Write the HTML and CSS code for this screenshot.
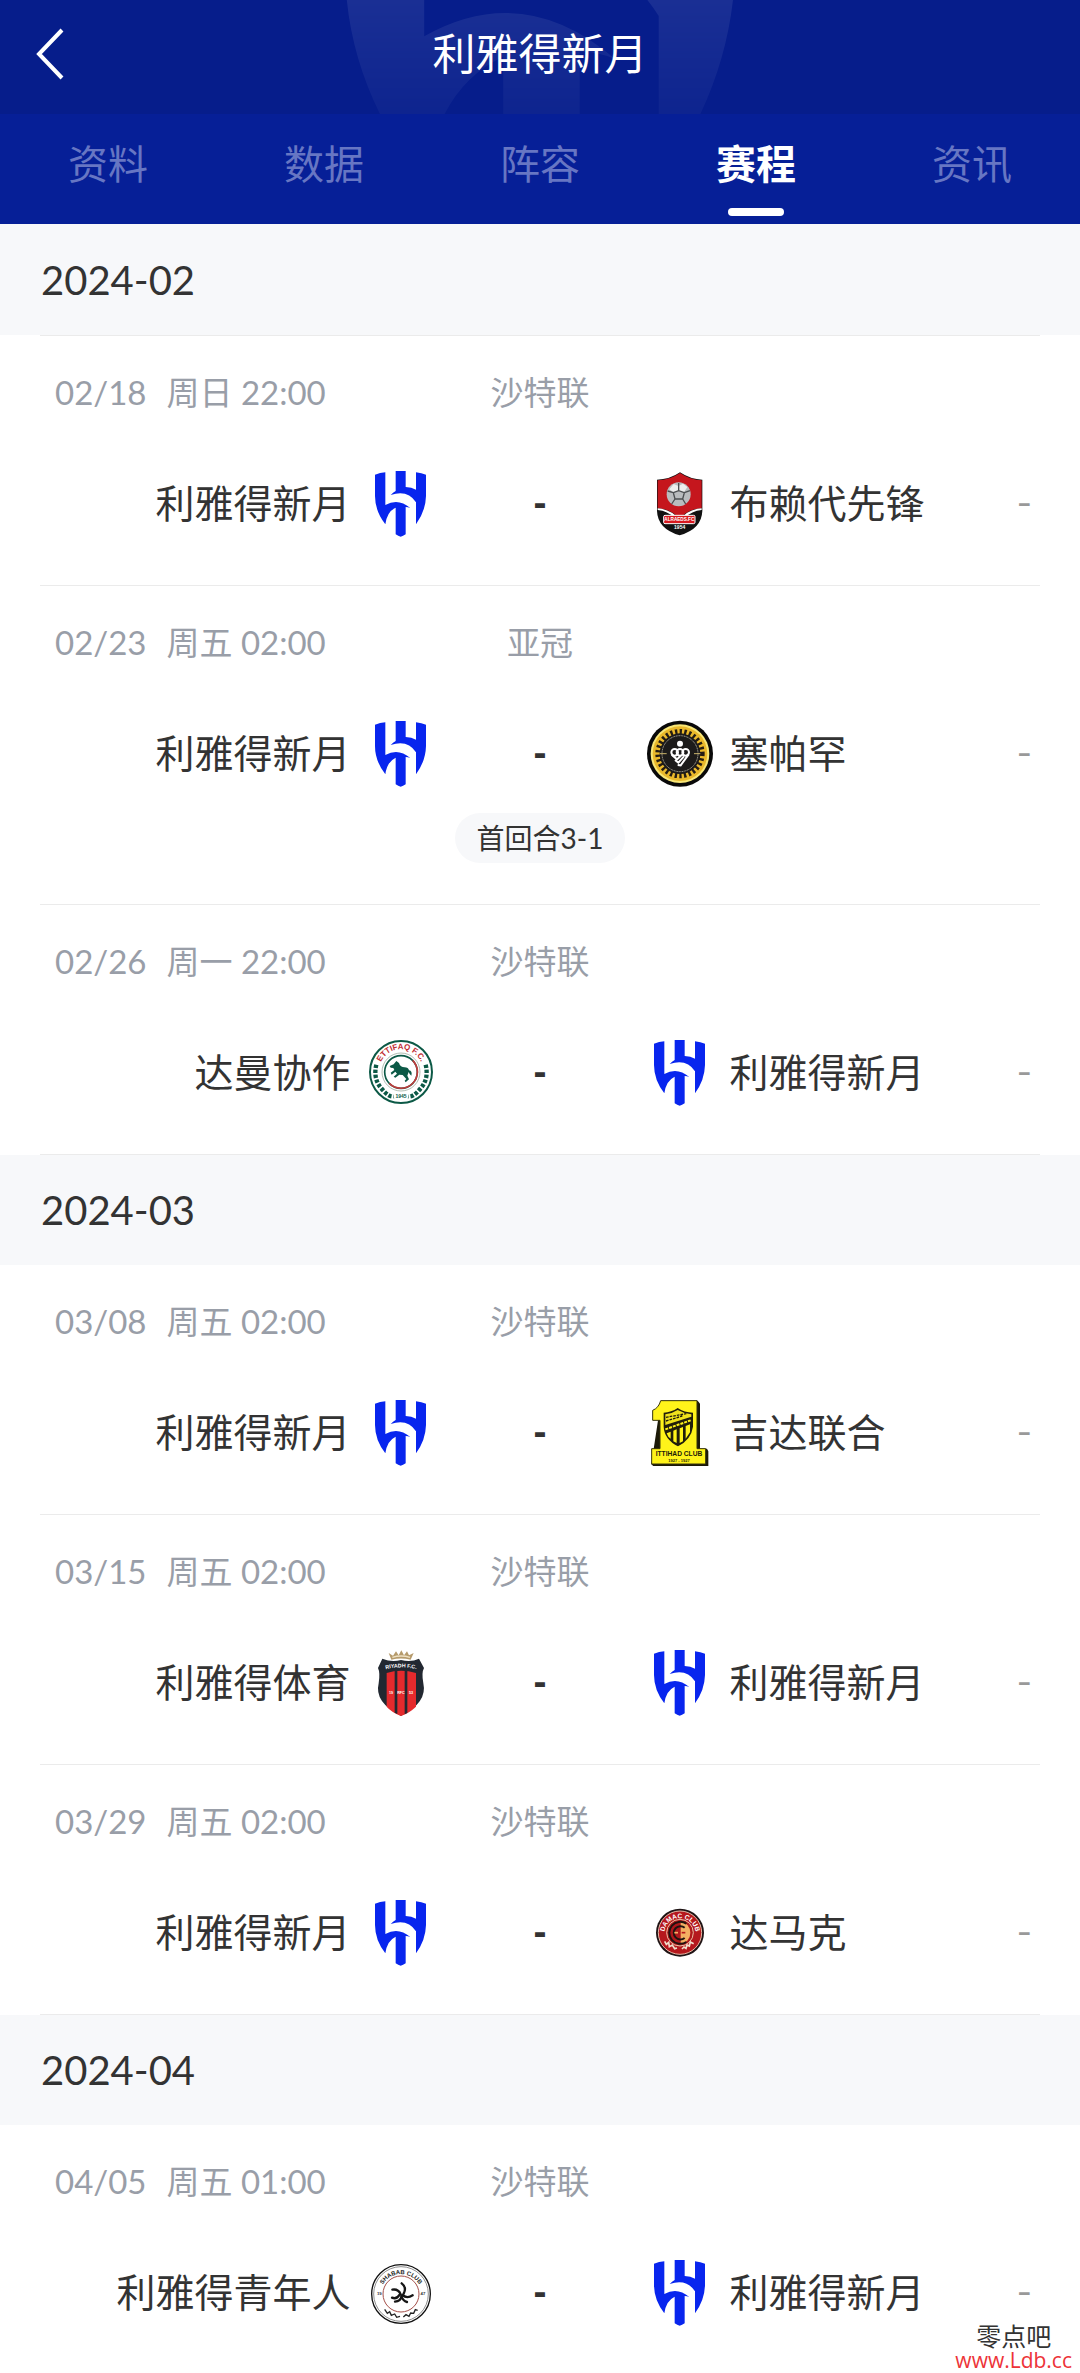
FILE: index.html
```html
<!DOCTYPE html>
<html lang="zh-CN">

<head>
  <meta charset="UTF-8" />
  <meta name="viewport" content="width=device-width, initial-scale=1.0" />
  <title>利雅得新月 - 赛程</title>
  <link rel="stylesheet" href="styles.css">
</head>

<body>
  <!-- Al Hilal crest, used in the header and in every match -->
  <svg class="sprite" aria-hidden="true">
    <symbol id="hilal" viewBox="-24 -6 204 204">
      <path fill="currentColor" d="M0 11Q15 5 31 4V102Q70 80 106 111Q99 108 92 108V190Q84 195 77 197Q70 195 62 190V110Q36 122 31 160Q0 120 0 75Z" />
      <path fill="currentColor" d="M62 0H92V48Q110 49 123 56V4Q140 6 153 11V75Q152 120 123 160V94Q98 55 47 72Q54 64 62 60Z" />
    </symbol>
  </svg>

  <header class="topbar">
    <svg class="topbar-crest" aria-hidden="true"><use href="#hilal" /></svg>
    <button class="back-btn" type="button" aria-label="返回">
      <svg width="30" height="54" viewBox="0 0 30 54" aria-hidden="true">
        <path d="M27 3L4 27L27 51" fill="none" stroke="#fff" stroke-width="4" />
      </svg>
    </button>
    <h1>利雅得新月</h1>
  </header>

  <nav class="tabs">
    <a href="#info">资料</a>
    <a href="#stats">数据</a>
    <a href="#squad">阵容</a>
    <a href="#schedule" class="active" aria-current="page">赛程</a>
    <a href="#news">资讯</a>
  </nav>

  <main class="schedule" id="schedule">
    <section class="month">
      <h2>2024-02</h2>
      <ul class="matches">
        <li class="match">
          <div class="match-info">
            <div class="match-date"><span>02/18</span><span>周日 22:00</span></div>
            <div class="league">沙特联</div>
          </div>
          <div class="teams">
            <div class="team home">
              <span>利雅得新月</span>
              <svg class="crest"><use href="#hilal" /></svg>
            </div>
            <div class="score">-</div>
            <div class="team">
              <svg class="crest" viewBox="15 42 204 204">
                <path fill="#111" d="M48 74Q85 74 117 52Q150 74 184 74V168Q182 222 116 241Q50 222 48 168Z" />
                <path fill="#c5161d" d="M50 76Q85 76 117 54Q150 76 182 76V160Q150 160 116 188Q80 160 50 160Z" />
                <path fill="#fff" d="M50 160Q80 162 104 182H128Q150 162 182 160V165Q152 168 132 188H100Q80 168 50 165Z" />
                <circle cx="113" cy="118" r="36" fill="#b9bcbe" />
                <path fill="#eee" d="M98 87L112 93L126 86L139 96L129 112L113 108L97 112L85 103Z" />
                <path fill="none" stroke="#4c4f51" stroke-width="4" d="M113 84V108M97 113L113 107L130 113L125 132H102ZM97 113L80 108M130 113L147 107M102 132L92 147M125 132L134 147" />
                <rect x="68" y="181" width="94" height="25" rx="4" fill="#d81920" stroke="#fff" stroke-width="3" />
                <text x="115" y="199" font-size="14" fill="#fff">ALRAEDS.FC</text>
                <text x="116" y="223" font-size="15" fill="#fff">1954</text>
              </svg>
              <span>布赖代先锋</span>
            </div>
            <div class="result">-</div>
          </div>
        </li>
        <li class="match two-legs">
          <div class="match-info">
            <div class="match-date"><span>02/23</span><span>周五 02:00</span></div>
            <div class="league">亚冠</div>
          </div>
          <div class="teams">
            <div class="team home">
              <span>利雅得新月</span>
              <svg class="crest"><use href="#hilal" /></svg>
            </div>
            <div class="score">-</div>
            <div class="team">
              <svg class="crest" viewBox="30 27 204 204">
                <circle cx="132" cy="131" r="99" fill="#090909" />
                <circle cx="132" cy="131" r="88" fill="#f8e778" />
                <circle cx="132" cy="131" r="82" fill="#eab92b" />
                <circle cx="132" cy="131" r="66" fill="none" stroke="#241c13" stroke-width="16" stroke-dasharray="7 7" />
                <circle cx="132" cy="131" r="61" fill="#1c1b1a" />
                <circle cx="132" cy="131" r="54" fill="none" stroke="#b8b3a3" stroke-width="3" stroke-dasharray="3 2" />
                <circle cx="132" cy="101" r="9" fill="#fff" />
                <g fill="none" stroke="#fff" stroke-width="6">
                  <circle cx="116" cy="127" r="10" />
                  <circle cx="132" cy="127" r="10" />
                  <circle cx="149" cy="127" r="10" />
                  <path d="M107 134L123 148L134 138M117 150L127 158L144 139M125 165L134 166L158 133" />
                </g>
                <path stroke="#c9b46b" stroke-width="3" d="M72 131H92M174 131H193" />
              </svg>
              <span>塞帕罕</span>
            </div>
            <div class="result">-</div>
          </div>
          <div class="first-leg">首回合3-1</div>
        </li>
        <li class="match">
          <div class="match-info">
            <div class="match-date"><span>02/26</span><span>周一 22:00</span></div>
            <div class="league">沙特联</div>
          </div>
          <div class="teams">
            <div class="team home">
              <span>达曼协作</span>
              <svg class="crest" viewBox="18 24 204 204">
                <circle cx="120" cy="126" r="93" fill="#fff" stroke="#0c5946" stroke-width="6" />
                <circle cx="120" cy="126" r="49" fill="none" stroke="#0c5946" stroke-width="5" />
                <path fill="none" stroke="#c23b3b" stroke-width="5" d="M155 91A49 49 0 0 1 85 160" />
                <circle cx="120" cy="126" r="57" fill="none" stroke="#8a9c8c" stroke-width="2" />
                <path id="ettifaq-arc" fill="none" d="M55 112A66 66 0 0 1 185 112" />
                <text font-size="24" fill="#c02d31"><textPath href="#ettifaq-arc" startOffset="50%">ETTIFAQ F.C.</textPath></text>
                <path fill="none" stroke="#0c5946" stroke-width="13" stroke-dasharray="10 5" d="M46 104Q36 145 60 174T98 199M194 104Q204 145 180 174T142 199" />
                <path fill="#0c5946" d="M98 103L106 93L114 99Q118 112 131 112Q142 112 144 121Q155 123 151 137Q145 132 143 126L139 137L144 148L134 157L131 152L136 147L125 135L115 134L103 143L98 140L108 131L103 125L92 134L89 128L100 120L97 114L89 113L86 108Z" />
                <text x="120" y="203" font-size="15" fill="#0c5946">1945</text>
              </svg>
            </div>
            <div class="score">-</div>
            <div class="team">
              <svg class="crest"><use href="#hilal" /></svg>
              <span>利雅得新月</span>
            </div>
            <div class="result">-</div>
          </div>
        </li>
      </ul>
    </section>

    <section class="month">
      <h2>2024-03</h2>
      <ul class="matches">
        <li class="match">
          <div class="match-info">
            <div class="match-date"><span>03/08</span><span>周五 02:00</span></div>
            <div class="league">沙特联</div>
          </div>
          <div class="teams">
            <div class="team home">
              <span>利雅得新月</span>
              <svg class="crest"><use href="#hilal" /></svg>
            </div>
            <div class="score">-</div>
            <div class="team">
              <svg class="crest" viewBox="30 36 204 204">
                <path fill="#1b1908" d="M75 44H185L192 53V188H213L217 196V240L54 242L46 235Z" />
                <path fill="#fff31a" stroke="#37330b" stroke-width="3" d="M74 44H183V188H209V234H47V188H72V103H50V73Q68 66 74 44Z" />
                <path fill="#211e0b" d="M83 80Q106 79 125 66Q145 80 171 80V122Q166 160 126 181Q85 160 83 122Z" />
                <path fill="#efe21c" d="M88 85Q108 83 125 72Q145 83 166 85V92L88 117Z" />
                <path fill="none" stroke="#211e0b" stroke-width="4" stroke-dasharray="8 3" d="M90 94L151 83M90 105L139 90" />
                <path fill="none" stroke="#fff31a" stroke-width="6" stroke-dasharray="9 3" d="M88 130L164 103" />
                <path fill="#fff31a" d="M92 142L104 137V158L97 152ZM112 134L122 130V171L112 166ZM131 127L141 123V166L131 171ZM149 120L162 115V139L149 158Z" />
                <text x="129" y="211" font-size="20" fill="#1b1908">ITTIHAD CLUB</text>
                <text x="129" y="227" font-size="12" fill="#1b1908">1927 - 1927</text>
              </svg>
              <span>吉达联合</span>
            </div>
            <div class="result">-</div>
          </div>
        </li>
        <li class="match">
          <div class="match-info">
            <div class="match-date"><span>03/15</span><span>周五 02:00</span></div>
            <div class="league">沙特联</div>
          </div>
          <div class="teams">
            <div class="team home">
              <span>利雅得体育</span>
              <svg class="crest" viewBox="18 21 204 204">
                <path fill="#b69b6c" d="M91 56L83 36L96 44L105 31L113 43L121 28L129 43L138 31L144 43L158 36L149 56Q120 49 91 56Z" />
                <path fill="none" stroke="#eee0c2" stroke-width="4" d="M94 49Q120 41 147 49" />
                <path fill="#222831" d="M64 53Q92 65 120 57Q150 65 174 53L189 81Q181 95 187 127Q200 184 120 225Q39 184 53 127Q58 95 51 81Z" />
                <path fill="#e52a2d" d="M77 96Q120 83 165 96V197Q145 216 120 225Q92 214 77 197Z" />
                <path fill="#222831" d="M101 90H109V219L101 215ZM131 90H139V216L131 220Z" />
                <path id="riyadh-arc" fill="none" d="M68 86Q120 72 172 86" />
                <text font-size="16" fill="#fff"><textPath href="#riyadh-arc" startOffset="50%">RIYADH F.C.</textPath></text>
                <text x="90" y="159" font-size="11" fill="#fff">19</text>
                <text x="120" y="159" font-size="11" fill="#fff">RFC</text>
                <text x="150" y="159" font-size="11" fill="#fff">53</text>
              </svg>
            </div>
            <div class="score">-</div>
            <div class="team">
              <svg class="crest"><use href="#hilal" /></svg>
              <span>利雅得新月</span>
            </div>
            <div class="result">-</div>
          </div>
        </li>
        <li class="match">
          <div class="match-info">
            <div class="match-date"><span>03/29</span><span>周五 02:00</span></div>
            <div class="league">沙特联</div>
          </div>
          <div class="teams">
            <div class="team home">
              <span>利雅得新月</span>
              <svg class="crest"><use href="#hilal" /></svg>
            </div>
            <div class="score">-</div>
            <div class="team">
              <svg class="crest" viewBox="30 21 204 204">
                <circle cx="132" cy="125" r="72" fill="#1f1415" />
                <circle cx="132" cy="125" r="65" fill="#b5181d" stroke="#e7b8a5" stroke-width="3" />
                <circle cx="132" cy="125" r="40" fill="#ae171b" stroke="#edc3a6" stroke-width="3" />
                <path fill="#f3ae62" d="M134 91A35 35 0 0 1 134 160Z" />
                <path fill="none" stroke="#20120f" stroke-width="6" d="M151 98A33 33 0 1 0 151 153M146 110A20 20 0 1 0 146 141" />
                <path stroke="#f4b365" stroke-width="5" d="M115 125H126" />
                <path stroke="#b5181d" stroke-width="5" d="M137 125H148" />
                <path id="damac-arc" fill="none" d="M86 119A47 47 0 0 1 178 119" />
                <text font-size="20" fill="#fff"><textPath href="#damac-arc" startOffset="50%">DAMAC CLUB</textPath></text>
                <path fill="none" stroke="#f0dfcc" stroke-width="5" d="M86 151L91 160L98 154L100 167L109 162L116 173L123 171M138 174L144 168L150 172L153 162L160 165L163 153L173 158" />
              </svg>
              <span>达马克</span>
            </div>
            <div class="result">-</div>
          </div>
        </li>
      </ul>
    </section>

    <section class="month">
      <h2>2024-04</h2>
      <ul class="matches">
        <li class="match">
          <div class="match-info">
            <div class="match-date"><span>04/05</span><span>周五 01:00</span></div>
            <div class="league">沙特联</div>
          </div>
          <div class="teams">
            <div class="team home">
              <span>利雅得青年人</span>
              <svg class="crest" viewBox="18 18 204 204">
                <circle cx="120" cy="126" r="88" fill="#fff" stroke="#111" stroke-width="4" />
                <circle cx="120" cy="126" r="82" fill="none" stroke="#555" stroke-width="2" />
                <circle cx="120" cy="126" r="54" fill="none" stroke="#a44f49" stroke-width="3" />
                <path id="shabab-arc" fill="none" d="M58 118A63 63 0 0 1 182 118" />
                <text font-size="18" fill="#222"><textPath href="#shabab-arc" startOffset="50%">SHABAB CLUB</textPath></text>
                <text x="55" y="130" font-size="13" fill="#333">19</text>
                <text x="186" y="130" font-size="13" fill="#333">47</text>
                <path fill="none" stroke="#222" stroke-width="4" d="M71 172L79 184L86 179L91 190L101 186L107 196L117 193M127 195L135 188L144 193L149 183L158 184L163 173L170 175" />
                <g fill="none" stroke="#161616" stroke-width="7" stroke-linecap="round">
                  <path d="M122 94Q138 106 128 125" />
                  <path d="M94 113Q112 110 119 127" />
                  <path d="M93 137Q107 143 116 128" />
                  <path d="M102 149Q119 148 122 133" />
                  <path d="M155 130Q138 141 124 129" />
                  <path d="M138 150Q126 147 121 132" />
                </g>
              </svg>
            </div>
            <div class="score">-</div>
            <div class="team">
              <svg class="crest"><use href="#hilal" /></svg>
              <span>利雅得新月</span>
            </div>
            <div class="result">-</div>
          </div>
        </li>
      </ul>
    </section>
  </main>

  <div class="site-mark">
    <span>零点吧</span>
    <a href="#schedule">www.Ldb.cc</a>
  </div>
</body>

</html>
```
FILE: styles.css
```css
* {
  margin: 0;
  padding: 0;
  box-sizing: border-box;
}

body {
  position: relative;
  font-family: Lato, 'Noto Sans CJK SC', sans-serif;
  background: #fff;
  color: #333;
}

.sprite {
  display: none;
}

/* Header */
.topbar {
  position: relative;
  display: flex;
  align-items: center;
  justify-content: center;
  height: 114px;
  padding-bottom: 6px;
  overflow: hidden;
  background: #061d8b;
}

.topbar-crest {
  position: absolute;
  top: -239px;
  left: 50%;
  width: 520px;
  height: 520px;
  margin-left: -256px;
  color: #fff;
  opacity: 0.08;
  -webkit-mask-image: linear-gradient(#000 46%, rgba(0, 0, 0, 0.4) 68%);
  mask-image: linear-gradient(#000 46%, rgba(0, 0, 0, 0.4) 68%);
}

.back-btn {
  position: absolute;
  left: 35px;
  top: 27px;
  height: 54px;
  background: none;
  border: none;
  cursor: pointer;
}

.topbar h1 {
  position: relative;
  font-size: 43px;
  font-weight: 400;
  line-height: 60px;
  color: #fff;
}

.tabs {
  display: grid;
  grid-template-columns: repeat(5, 1fr);
  height: 110px;
  background: #061f97;
}

.tabs a {
  position: relative;
  padding-top: 20px;
  font-size: 40px;
  line-height: 60px;
  text-align: center;
  text-decoration: none;
  color: #6776c3;
}

.tabs a.active {
  font-weight: bold;
  color: #fff;
}

.tabs a.active::after {
  content: "";
  position: absolute;
  left: 50%;
  bottom: 8px;
  width: 56px;
  height: 8px;
  margin-left: -28px;
  border-radius: 4px;
  background: #fff;
}

/* Match list */
.schedule {
  padding-top: 1px;
  background: #f7f8fa;
}

.month h2 {
  padding: 0 41px;
  font-size: 40px;
  font-weight: 400;
  line-height: 110px;
}

.matches {
  padding: 0 40px;
  list-style: none;
  background: #fff;
}

.match {
  padding: 36px 8px 48px;
  border-bottom: 1px solid #ebebeb;
}

.month:first-child .match:first-child {
  border-top: 1px solid #ebebeb;
}

.month:last-child .match:last-child {
  padding-bottom: 46px;
  border-bottom: none;
}

.match.two-legs {
  padding-bottom: 41px;
}

.match-info {
  display: grid;
  grid-template-columns: 1fr auto 1fr;
  padding: 0 7px;
  margin-bottom: 57px;
  font-size: 33px;
  line-height: 40px;
  color: #999ea8;
}

.match-date {
  display: flex;
  gap: 20px;
  white-space: nowrap;
}

.teams {
  position: relative;
  display: grid;
  grid-template-columns: 1fr 211px 1fr;
  align-items: center;
  font-size: 39px;
  line-height: 68px;
}

.team {
  display: flex;
  align-items: center;
  gap: 16px;
  white-space: nowrap;
}

.team.home {
  justify-content: flex-end;
}

.crest {
  flex: none;
  width: 68px;
  height: 68px;
  color: #0825ee;
}

.crest text {
  font-family: 'Liberation Sans', sans-serif;
  font-weight: bold;
  text-anchor: middle;
}

.score {
  font-family: 'Liberation Sans', sans-serif;
  font-weight: bold;
  text-align: center;
}

.result {
  position: absolute;
  right: 0;
  font-family: Inter, sans-serif;
  font-size: 33px;
  color: #999;
}

.first-leg {
  width: max-content;
  margin: 26px auto 0;
  padding: 0 22px;
  border-radius: 25px;
  background: #f7f8fa;
  font-size: 28px;
  line-height: 50px;
}

/* Site name in the corner */
.site-mark {
  position: absolute;
  right: 8px;
  bottom: 0;
  display: flex;
  flex-direction: column;
  align-items: center;
  font-size: 25px;
  line-height: 24px;
}

.site-mark a {
  font-family: 'Open Sans', sans-serif;
  font-size: 21px;
  text-decoration: none;
  color: #ed3338;
}
```
